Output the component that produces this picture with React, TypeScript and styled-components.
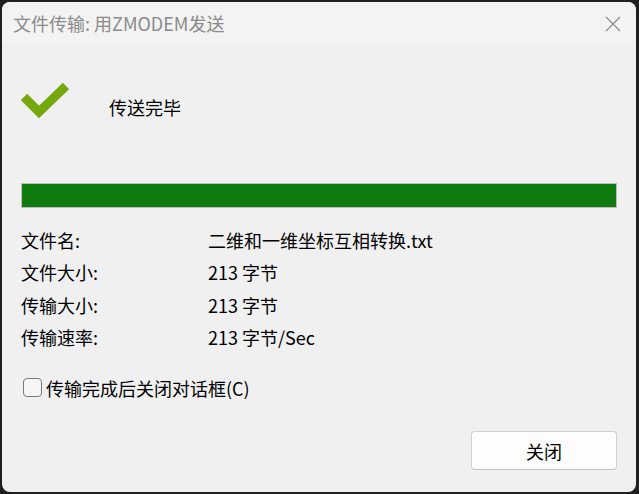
import styled, { createGlobalStyle } from 'styled-components';

const GlobalStyle = createGlobalStyle`
	html, body {
		margin: 0;
		padding: 0;
		background: #1f1f1f;
	}
	body {
		font-family: 'Noto Sans CJK SC', 'Noto Sans', sans-serif;
		font-size: 18px;
		color: #000;
	}
`;

const Window = styled.div`
	margin: 2px 3px 2px 2px;
	height: 490px;
	border-radius: 8px;
	overflow: hidden;
	background: #f0f0f0;
	display: flex;
	flex-direction: column;
`;

const TitleBar = styled.div`
	height: 42px;
	flex: none;
	background: #f3f3f3;
	display: flex;
	align-items: center;
	justify-content: space-between;
	padding: 0 14px 0 11px;
	color: #8a8a8a;
	font-size: 18px;
`;

const CloseButton = styled.div`
	width: 18px;
	height: 18px;
	display: flex;
	align-items: center;
	justify-content: center;
	margin-top: 1px;
`;

const Body = styled.div`
	flex: 1;
	display: flex;
	flex-direction: column;
	padding: 0 19px;
`;

const StatusRow = styled.div`
	display: flex;
	align-items: center;
	margin-top: 40px;
	height: 34px;
`;

const StatusText = styled.span`
	margin-left: 40px;
	margin-top: 12px;
`;

const Progress = styled.div`
	margin-top: 65px;
	height: 23px;
	border: 1px solid #bcbcbc;
	background: #eaeaea;
`;

const ProgressFill = styled.div`
	height: 100%;
	background: #107c10;
`;

const InfoGrid = styled.div`
	display: grid;
	grid-template-columns: 187px 1fr;
	grid-auto-rows: 32.3px;
	align-items: center;
	margin-top: 16px;
	line-height: 1;
`;

const CheckRow = styled.label`
	display: flex;
	align-items: center;
	gap: 4px;
	margin-top: 25px;
	line-height: 1;
`;

const Box = styled.span`
	width: 17px;
	height: 17px;
	border: 1px solid #7a7a7a;
	border-radius: 4px;
	background: #f5f5f5;
	margin-left: 2px;
`;

const Footer = styled.div`
	display: flex;
	justify-content: flex-end;
	margin-top: 34px;
`;

const Button = styled.button`
	width: 146px;
	height: 39px;
	border: 1px solid #d0d0d0;
	border-bottom-color: #c2c2c2;
	border-radius: 4px;
	background: #fdfdfd;
	font-family: inherit;
	font-size: 18px;
	color: #000;
	padding: 0;
`;

const info: [string, string][] = [
	['文件名:', '二维和一维坐标互相转换.txt'],
	['文件大小:', '213 字节'],
	['传输大小:', '213 字节'],
	['传输速率:', '213 字节/Sec'],
];

const CheckMark = () => (
	<svg width="48" height="36" viewBox="0 0 48 36">
		<path
			d="M3 14 L18 29 L45 3"
			fill="none"
			stroke="#74a80c"
			strokeWidth="9"
			strokeLinejoin="miter"
		/>
	</svg>
);

export default function App() {
	return (
		<>
			<GlobalStyle />
			<Window>
				<TitleBar>
					<span>文件传输: 用ZMODEM发送</span>
					<CloseButton>
						<svg width="16" height="16" viewBox="0 0 16 16">
							<path d="M1 1 L15 15 M15 1 L1 15" stroke="#8a8a8a" strokeWidth="1.2" />
						</svg>
					</CloseButton>
				</TitleBar>
				<Body>
					<StatusRow>
						<CheckMark />
						<StatusText>传送完毕</StatusText>
					</StatusRow>
					<Progress>
						<ProgressFill style={{ width: '100%' }} />
					</Progress>
					<InfoGrid>
						{info.flatMap(([k, v]) => [
							<span key={k}>{k}</span>,
							<span key={k + '-v'}>{v}</span>,
						])}
					</InfoGrid>
					<CheckRow>
						<Box />
						<span>传输完成后关闭对话框(C)</span>
					</CheckRow>
					<Footer>
						<Button>关闭</Button>
					</Footer>
				</Body>
			</Window>
		</>
	);
}
